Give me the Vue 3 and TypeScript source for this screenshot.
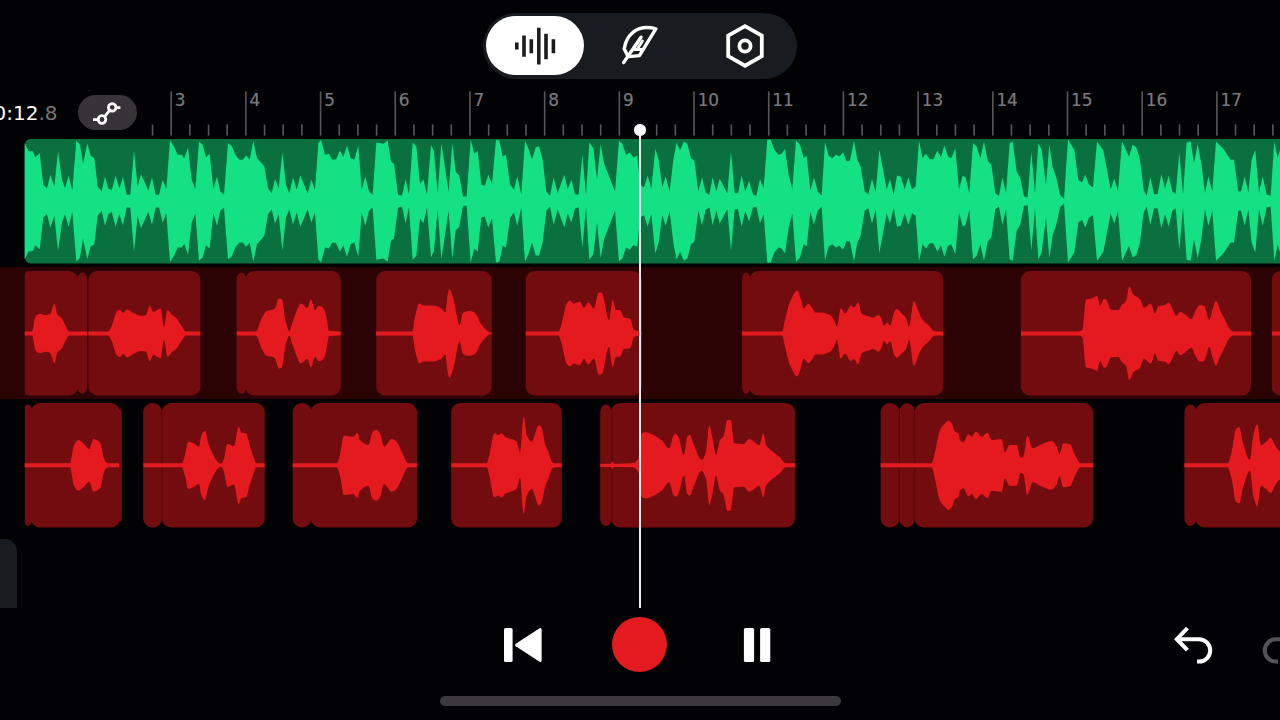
<script setup lang="ts">
interface Clip { x: number; end: number; r: number; inset?: number; rl?: number }
interface Wave { offset: number; points: string }
interface Peak { x: number; a: number }

const bars = Array.from({ length: 16 }, (_, i) => i + 2)
const BAR = 74.69
const barX = (n: number): number => 171.2 + (n - 3) * BAR
const minorTicks: number[] = []
for (let n = 2; n <= 17; n++) {
  for (let q = 1; q < 4; q++) {
    const x = barX(n) + (BAR * q) / 4
    if (x > 150 && x < 1280) minorTicks.push(x)
  }
}

const f = (v: number): string => v.toFixed(2)

// Monotone cubic through the peaks: flat at every local extreme.
function smooth(pts: Peak[], centre: number, sign: number): string {
  const slope = pts.map((p, i) => {
    const a = pts[i - 1]
    const b = pts[i + 1]
    if (!a || !b || b.x === p.x || a.x === p.x) return 0
    const l = (p.a - a.a) / (p.x - a.x)
    const r = (b.a - p.a) / (b.x - p.x)
    return l * r <= 0 ? 0 : (2 * l * r) / (l + r)
  })
  let d = ''
  for (let i = 1; i < pts.length; i++) {
    const p = pts[i - 1]
    const q = pts[i]
    const h = (q.x - p.x) / 3
    const y = (a: number) => f(centre + sign * a)
    d += `C${f(p.x + h)} ${y(p.a + slope[i - 1] * h)} ${f(q.x - h)} ${y(q.a - slope[i] * h)} ${f(q.x)} ${y(q.a)}`
  }
  return d
}

// Peaks are "x,level" pairs in thirds of a pixel; the lower half mirrors the upper one.
function wavePath(segments: Wave[], zero: number, centre: number, curved = true): string {
  const pts: Peak[] = segments.flatMap(s => s.points.trim().split(/\s+/).map(p => {
    const [x, y] = p.split(',').map(Number)
    return { x: (x + s.offset) / 3, a: (zero - y) / 3 }
  }))
  const back = [...pts].reverse()
  if (curved) {
    return `M${f(pts[0].x)} ${f(centre - pts[0].a)}${smooth(pts, centre, -1)}L${f(back[0].x)} ${f(centre + back[0].a)}${smooth(back, centre, 1)}Z`
  }
  const top = pts.map(p => `${f(p.x)} ${f(centre - p.a)}`)
  const bottom = back.map(p => `${f(p.x)} ${f(centre + p.a)}`)
  return `M${top.concat(bottom).join('L')}Z`
}

function clipPath(c: Clip): string {
  const t = c.inset ?? 0
  const b = 124.4 - t
  const w = c.end - c.x
  const rx = Math.min(c.r, w / 2)
  const ry = c.r
  const lx = c.rl ?? rx
  const ly = c.rl ?? ry
  return `M${c.x + lx} ${t}H${c.end - rx}A${rx} ${ry} 0 0 1 ${c.end} ${t + ry}V${b - ry}A${rx} ${ry} 0 0 1 ${c.end - rx} ${b}H${c.x + lx}A${lx} ${ly} 0 0 1 ${c.x} ${b - ly}V${t + ly}A${lx} ${ly} 0 0 1 ${c.x + lx} ${t}Z`
}

const beat = wavePath([
  { offset: 0, points: '74,190 86,214 98,214 106,232 119,220 130,315 141,325 151,285 163,320 174,215 186,300 195,325 206,288 217,332 229,182 240,195 249,252 262,190 272,228 283,235 293,320 305,335 315,290 325,325 335,332 347,287 358,325 369,292 380,345 391,345 402,212 413,320 423,283 445,332 456,293 467,345 477,345 488,300 499,328 510,182 522,200 533,225 545,225 553,236 564,203 575,300 586,328 597,185 608,195 618,232 629,222 640,328 651,290 661,335 672,345 684,190 695,198 706,225 718,240 728,240 739,227 749,240 760,183 771,235 783,248 793,260 804,325 815,340 825,297 836,325 847,217 858,315 868,340 879,293 890,330 901,287 923,340 934,300 945,330 955,190' },
  { offset: 960, points: '3,180 15,225 26,222 37,240 48,238 60,212 70,232 81,197 92,235 103,240 115,197 125,330 136,290 147,335 158,345 169,188 190,192 203,183 213,245 222,252 234,345 246,348 257,298 267,345 278,188 289,200 300,312 310,298 321,345 333,195 342,215 353,340 364,190 386,335 397,190 407,275 418,288 429,350 440,350 452,180 463,222 473,213 484,315 494,318 505,285 516,313 528,180 538,182 548,230 558,225 570,313 582,330 592,290 604,345 615,183 625,205 636,240 647,202 657,200 668,240 679,335 690,348 701,293 713,340 733,285 743,328 754,300 765,343 776,345 787,225 798,345 808,188 820,205 831,300 842,193 852,250 885,335 897,183 907,192 918,225 929,218 940,232 952,228' },
  { offset: 1920, points: '0,315 12,322 23,288 34,325 46,207 56,240 67,322 77,290 89,335 100,240 110,188 120,212 132,185 142,192 153,235 163,242 175,335 186,292 197,338 208,345 218,292 229,335 239,297 262,340 273,215 284,340 294,340 305,287 316,335 327,303 339,345 349,348 360,298 371,325 382,180 392,180 403,210 415,225 425,222 435,207 446,285 457,328 468,182 480,195 491,235 500,228 511,332 522,293 533,335 545,347 555,187 566,228 577,235 588,225 598,230 609,218 620,245 630,242 642,183 652,240 662,260 674,335 685,343 696,297 707,338 718,208 740,328 750,298 761,345 771,287 782,290 794,328 805,293 816,328 827,320 837,183 848,235 858,222 869,238 880,238 892,213 903,232 913,197 924,230 934,235 946,205 957,330' },
  { offset: 2880, points: '8,288 17,293 28,340 39,190 50,200 61,235 72,185 83,242 94,255 106,340 117,348 127,293 138,340 149,190 158,185 170,275 181,295 192,350 203,352 214,215 225,340 235,190 245,210 258,315 268,193 278,262 288,290 300,345 312,358 324,180 343,210 355,300 366,308 376,285 387,315 399,322 411,185 430,212 452,328 463,297 474,335 486,185 507,230 518,195 529,202 540,240 551,330 560,348 571,293 582,343 593,343 604,283 615,325 626,288 637,335 647,343 658,218 669,345 680,188 692,185 702,250 713,193 724,250 735,340 745,290 757,335 768,185 790,207 812,240 822,240 835,335 843,335 854,290 865,338 875,240 886,210 897,340 908,290 920,345 932,348 943,185 953,235 960,210' },
], 364, 62.2, false)

const leadClips: Clip[] = [
  { x: 24.8, end: 78, r: 9, rl: 4 },
  { x: 77.4, end: 87.2, r: 7, inset: 1.6 },
  { x: 88.4, end: 200.4, r: 9 },
  { x: 236.6, end: 246.4, r: 7, inset: 1.6 },
  { x: 245.4, end: 340.8, r: 9 },
  { x: 376.2, end: 491.8, r: 9 },
  { x: 525.8, end: 642, r: 9 },
  { x: 742, end: 750.4, r: 7, inset: 1.6 },
  { x: 749.2, end: 943.4, r: 9 },
  { x: 1020.8, end: 1251, r: 9 },
  { x: 1271.8, end: 1300, r: 9 },
]
const leadWaves = [
  [{ offset: 0, points: '74,199 96,199 105,160 112,148 122,146 135,150 150,147 157,130 163,115 172,148 184,158 198,185 207,199 262,199' }],
  [{ offset: 0, points: '265,199 325,199 335,182 350,140 360,134 370,143 380,133 400,143 425,152 438,150 449,122 460,140 482,130 492,185 503,135 515,148 530,160 545,183 558,199 601,199' }],
  [{ offset: 0, points: '710,199 768,199 785,160 800,138 815,135 825,130 836,100 846,103 856,165 868,198 878,170 893,130 902,115 922,128 933,103 945,135 955,122 965,124 972,132 980,160 987,197 1022,199' }],
  [{ offset: 960, points: '168,199 277,199 285,155 298,115 310,121 340,121 365,130 376,142 382,95 388,72 400,100 419,180 428,145 445,138 460,140 470,150 482,175 515,203' }],
  [{ offset: 960, points: '617,199 715,199 725,175 740,115 750,106 760,115 780,110 792,128 805,112 822,130 836,82 845,82 867,165 878,105 888,135 900,135 912,158 930,160 943,195 965,199' }],
  [{ offset: 1890, points: '336,199 456,199 465,165 480,110 502,76 512,100 521,130 535,116 548,130 556,142 575,142 600,150 612,165 621,185 632,130 645,145 663,122 672,128 684,112 695,145 720,155 730,158 745,150 753,158 762,182 772,172 780,182 793,140 800,132 815,145 828,158 837,185 852,108 862,130 875,160 895,180 915,199 940,199' }],
  [{ offset: 2880, points: '183,199 355,199 367,195 378,103 395,100 412,93 420,122 432,102 440,105 452,133 475,135 485,120 498,108 508,65 520,88 540,102 552,128 572,115 585,145 595,123 615,120 626,112 650,152 660,140 675,148 695,162 705,140 720,120 732,122 748,165 758,132 768,108 780,135 795,165 808,190 820,199 873,199' }],
  [{ offset: 2880, points: '936,199 965,199' }],
].map(s => wavePath(s, 205, 62.4))

const backClips: Clip[] = [
  { x: 24.8, end: 32, r: 7, rl: 3, inset: 1.6 },
  { x: 30.8, end: 120, r: 9 },
  { x: 118.6, end: 121.8, r: 3, inset: 6 },
  { x: 143.2, end: 162, r: 9 },
  { x: 162, end: 264.8, r: 9 },
  { x: 292.6, end: 311.4, r: 9 },
  { x: 310.8, end: 417, r: 9 },
  { x: 451.2, end: 561.8, r: 9 },
  { x: 600.2, end: 611.6, r: 8, inset: 1.4 },
  { x: 611, end: 795, r: 9 },
  { x: 880.6, end: 899.4, r: 9 },
  { x: 899.4, end: 914.8, r: 9 },
  { x: 914.6, end: 1093, r: 9 },
  { x: 1184.4, end: 1196.4, r: 8, inset: 1.4 },
  { x: 1195.4, end: 1300, r: 9 },
]
const seams = [162, 899.2, 914.8, 612]
const backWaves = [
  [{ offset: 0, points: '74,595 210,595 222,540 235,525 250,535 268,552 280,522 300,532 312,580 322,595 357,595' }],
  [{ offset: 0, points: '430,595 545,595 555,570 565,530 580,535 597,545 603,515 615,497 625,535 640,570 655,592 665,596 672,580 682,537 702,543 716,485 725,503 738,505 750,545 762,580 768,595 794,595' }],
  [{ offset: 960, points: '-82,595 50,595 60,570 72,512 100,515 112,503 120,525 145,540 158,500 170,495 180,505 192,545 215,522 230,530 245,560 265,595 291,595' }],
  [{ offset: 960, points: '394,595 500,595 508,570 523,505 535,510 545,505 555,515 590,530 600,563 611,455 620,510 635,530 657,480 665,490 676,540 685,560 697,592 706,595 725,595' }],
  [
    { offset: 960, points: '841,596 872,596 877,590 883,596 940,595 952,585' },
    { offset: 1890, points: '27,577 35,505 47,502 70,510 95,525 118,550 130,512 137,507 145,515 162,570 172,515 180,510 190,535 215,585 228,560 238,482 248,520 258,570 270,525 280,515 292,465 302,465 313,535 340,537 358,522 388,540 400,505 408,540 430,562 450,577 467,595 495,595' },
  ],
  [
    { offset: 1890, points: '752,595 905,595 915,560 930,495 945,475 955,467 965,475 975,500 985,505' },
    { offset: 2880, points: '0,525 10,532 25,508 35,515 48,500 65,515 82,503 95,525 125,522 135,562 148,540 170,540 182,578 190,575 202,512 218,550 240,540 275,528 290,545 298,568 310,535 330,538 345,570 362,595 400,595' },
  ],
  [{ offset: 2880, points: '673,595 803,595 815,560 828,492 838,487 848,530 870,585 880,510 892,478 903,540 918,530 932,518 945,540 960,558' }],
].map(s => wavePath(s, 601, 62.3))
</script>

<template>
  <div class="app">
    <header class="toolbar">
      <nav class="tabs">
        <button class="tab active" aria-label="Tracks">
          <svg width="48" height="44" viewBox="0 0 48 44">
            <path d="M5.8 18.5v7M13 11.4v21.4M20.3 15.2v14M27.8 3.8v36.6M35 9.8v25.4M42.4 15.2v14" stroke="#1b1c20" stroke-width="3.6" />
          </svg>
        </button>
        <button class="tab" aria-label="Lyrics">
          <svg width="42" height="44" viewBox="0 0 42 44" fill="none" stroke="#fff" stroke-width="3.4" stroke-linejoin="round" stroke-linecap="round">
            <path d="M8.6 31.4 5.2 25C7 12 17 -.4 36.8 4.8L20.4 31.6 9.6 32.6" />
            <path d="M4.6 38.6 22 13.2" />
            <path d="M14.6 25.6H24M18.2 25.2 23.4 17" stroke-width="3" />
          </svg>
        </button>
        <button class="tab" aria-label="Settings">
          <svg width="44" height="46" viewBox="0 0 44 46" fill="none" stroke="#fff">
            <path d="M22 3.2 38.8 12.6V33.2L22 42.7 5.2 33.2V12.6Z" stroke-width="3.8" />
            <circle cx="22" cy="23" r="5.6" stroke-width="3.8" />
          </svg>
        </button>
      </nav>
    </header>

    <section class="ruler">
      <svg class="ticks" width="1280" height="48" viewBox="0 0 1280 48">
        <rect v-for="n in bars.slice(1)" :key="n" :x="barX(n) - 0.8" y="0.4" width="1.6" height="44.2" fill="#58565b" />
        <rect v-for="x in minorTicks" :key="x" :x="x - 0.8" y="33.4" width="1.6" height="11.2" fill="#58565b" />
        <text v-for="n in bars.slice(1)" :key="'t' + n" :x="barX(n) + 3.6" y="15">{{ n }}</text>
      </svg>
      <div class="status">
        <div class="time">0:12<span>.8</span></div>
        <button class="automation" aria-label="Automation">
          <svg width="30" height="26" viewBox="0 0 30 26" fill="none" stroke="#fff" stroke-width="2.8">
            <path d="M1 19.7H6M13 16.2 18.6 9.2M23.7 7.6H28.4" />
            <circle cx="10" cy="19.5" r="3.8" />
            <circle cx="20.2" cy="7.4" r="3.8" />
          </svg>
        </button>
      </div>
    </section>

    <main class="lanes">
      <svg class="lane beat" width="1280" height="125" viewBox="0 0 1280 125">
        <path d="M31 0H1280V124.4H31A6 6 0 0 1 24.7 119V5A6 6 0 0 1 31 0Z" fill="#0a7040" />
        <path :d="beat" fill="#14e184" />
      </svg>
      <div class="lane-row selected">
        <svg class="lane" width="1280" height="125" viewBox="0 0 1280 125">
          <path v-for="(c, i) in leadClips" :key="i" :d="clipPath(c)" fill="#720c0f" />
          <path v-for="(d, i) in leadWaves" :key="'w' + i" :d="d" fill="#e51a1e" />
        </svg>
      </div>
      <div class="lane-row">
        <svg class="lane" width="1280" height="125" viewBox="0 0 1280 125">
          <path v-for="(c, i) in backClips" :key="i" :d="clipPath(c)" fill="#720c0f" />
          <rect v-for="x in seams" :key="x" :x="x - 0.5" y="7" width="1" height="110" fill="#5c080b" />
          <path v-for="(d, i) in backWaves" :key="'w' + i" :d="d" fill="#e51a1e" />
        </svg>
      </div>
    </main>

    <div class="drawer"></div>

    <footer class="transport">
      <div class="main-controls">
        <svg width="40" height="36" viewBox="0 0 40 36" fill="#fff">
          <rect x="1" y="1" width="8.6" height="34" rx="1.6" />
          <path d="M36.2 1.5Q38.6 .2 38.6 2.8V33.2Q38.6 35.8 36.2 34.5L12.8 19.2Q11 18 12.8 16.8Z" />
        </svg>
        <button class="record" aria-label="Record"></button>
        <svg width="28" height="36" viewBox="0 0 28 36" fill="#fff">
          <rect x=".9" y="1" width="10.2" height="34" rx="1.6" />
          <rect x="17.1" y="1" width="10.2" height="34" rx="1.6" />
        </svg>
      </div>
      <div class="history">
        <svg width="42" height="42" viewBox="0 0 42 42" fill="none" stroke="#fff" stroke-width="4">
          <path d="M16.4 3.2 5.8 14.2 16.4 25.2M6 14.2H28A11.2 11.2 0 0 1 28 36.6H26" />
        </svg>
        <svg width="42" height="42" viewBox="0 0 42 42" fill="none" stroke="#555357" stroke-width="4">
          <path d="M25.6 3.2 36.2 14.2 25.6 25.2M36 14.2H14A11.2 11.2 0 0 0 14 36.6H16" />
        </svg>
      </div>
      <div class="home-indicator"></div>
    </footer>

    <div class="playhead"></div>
  </div>
</template>

<style>
body { background: #020104; overflow: hidden; }
</style>

<style scoped>
.app {
  position: relative;
  display: flex;
  flex-direction: column;
  width: 1280px;
  height: 720px;
  overflow: hidden;
  background: #020104;
  font-family: "DejaVu Sans", sans-serif;
}
button { border: 0; padding: 0; margin: 0; background: none; }
svg { display: block; flex: none; }
.toolbar { display: flex; justify-content: center; height: 91px; padding: 13px 0 0; box-sizing: border-box; flex: none; }
.tabs { display: flex; box-sizing: border-box; width: 314px; height: 65.5px; padding: 3px; border-radius: 33px; background: #181c20; gap: 7px; }
.tab { display: flex; align-items: center; justify-content: center; width: 98px; height: 59px; border-radius: 30px; }
.tab.active { background: #fff; }
.ruler { position: relative; flex: none; height: 48px; }
.ticks { position: absolute; left: 0; top: 0; }
.ticks text { font-size: 16.9px; fill: #7b797f; stroke: #7b797f; stroke-width: 0.2px; }
.status { position: relative; display: flex; align-items: flex-start; width: 146px; height: 48px; box-sizing: border-box; padding-top: 4px; }
.time { width: 78px; box-sizing: border-box; flex: none; margin-left: -6.5px; line-height: 36px; font-size: 20px; color: #fff; white-space: nowrap; }
.time span { color: #77757a; }
.automation { display: flex; flex: none; align-items: center; justify-content: center; width: 58.5px; height: 35px; margin-left: 6.5px; border-radius: 18px; background: #363438; }
.lanes { display: flex; flex-direction: column; flex: none; padding-top: 0.3px; }
.lane-row { box-sizing: border-box; height: 132px; padding-top: 4px; }
.beat { margin-bottom: 2.7px; }
.selected { background: #2c0305; }
.drawer { position: absolute; left: 0; top: 539px; width: 17.4px; height: 69px; border-radius: 0 12px 0 0; background: #181c20; }
.transport { position: relative; margin-top: auto; height: 112px; }
.main-controls { display: flex; align-items: center; justify-content: center; height: 73.5px; padding-right: 6.5px; }
.main-controls svg:first-child { margin-right: 69.5px; }
.main-controls svg:last-child { margin-left: 75.5px; }
.record { flex: none; width: 55px; height: 55px; border-radius: 50%; background: #e31b1f; }
.history { position: absolute; left: 1171px; top: 17px; display: flex; gap: 48.5px; }
.home-indicator { width: 401px; height: 9.5px; margin: 14.5px auto 0; border-radius: 5px; background: #3b393c; }
.playhead { position: absolute; left: 638.6px; top: 130px; width: 2.4px; height: 478px; background: #f3ecec; }
.playhead::before { content: ""; position: absolute; left: -4.2px; top: -5.6px; width: 11.2px; height: 11.2px; border-radius: 50%; background: #fff; }
</style>
